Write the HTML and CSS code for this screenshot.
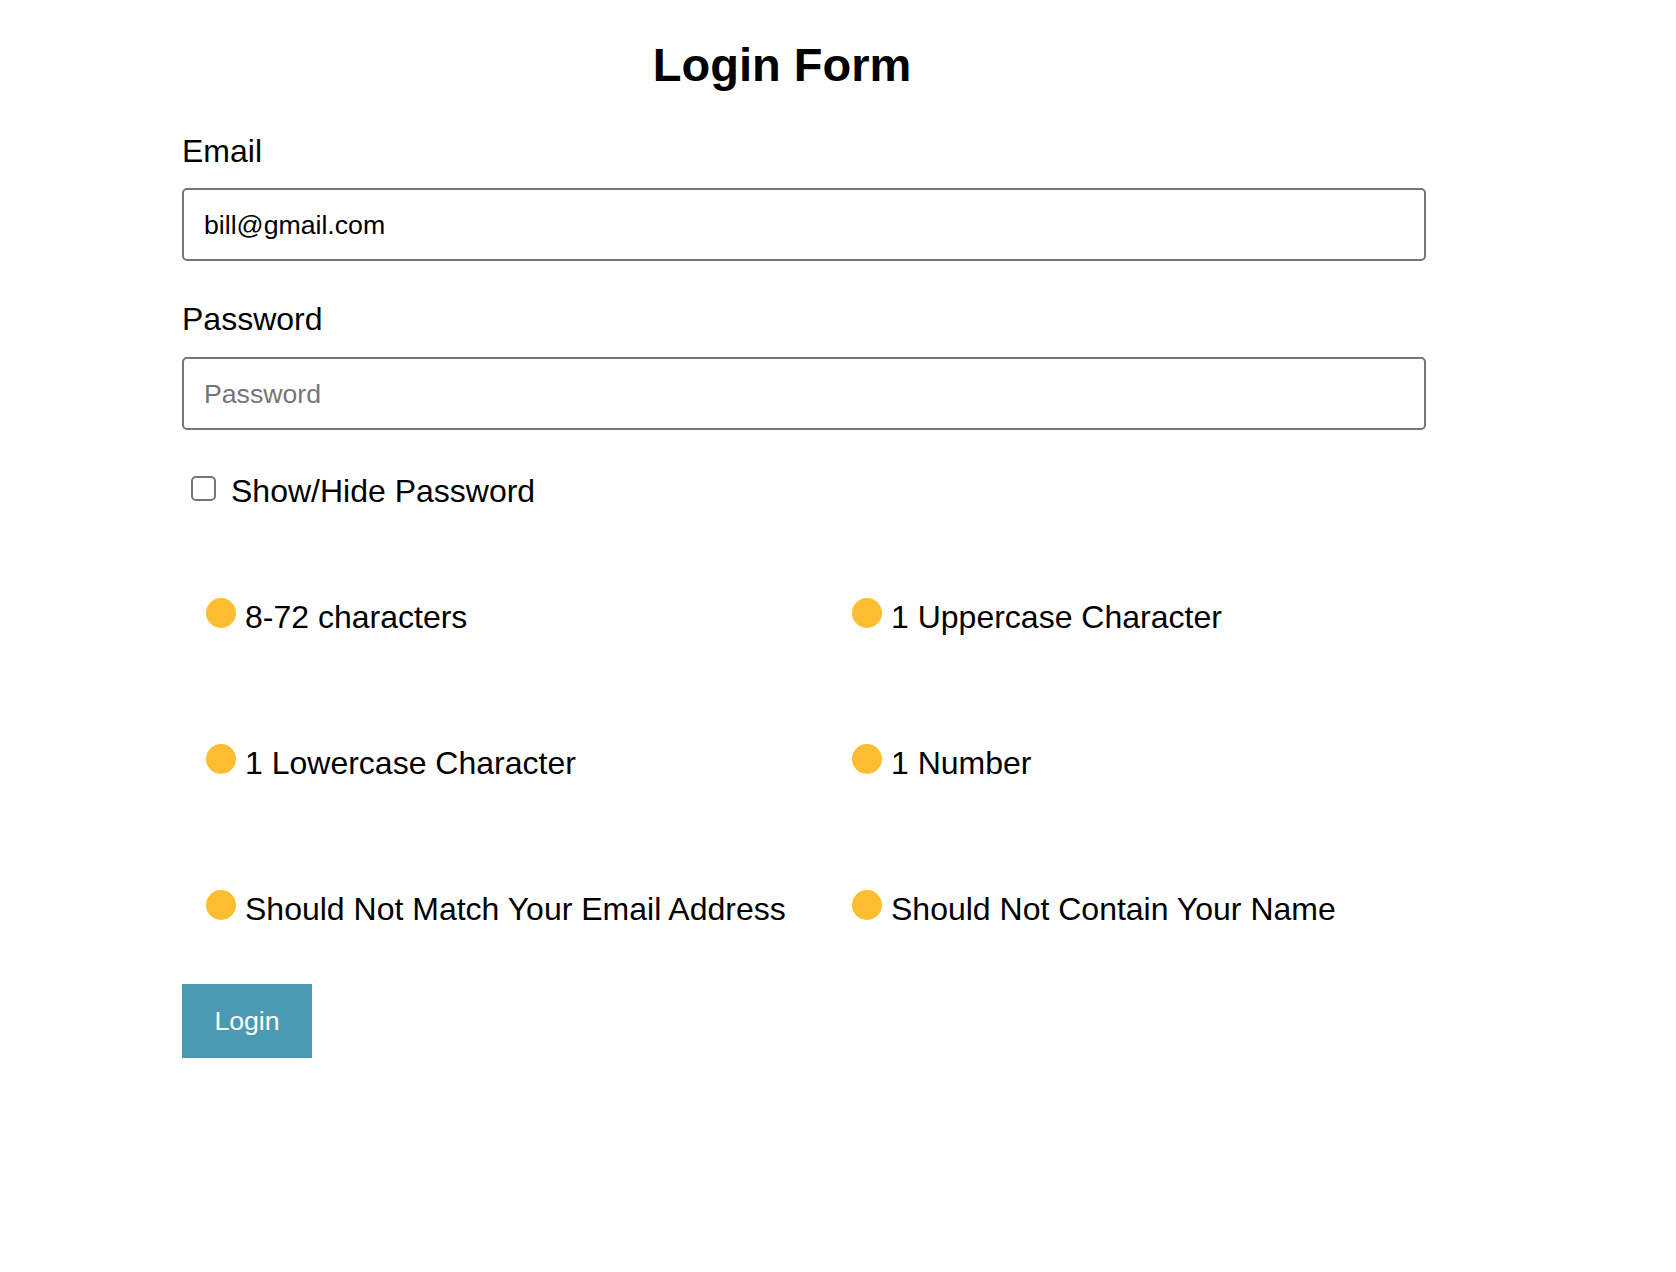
FILE: index.html
```html
<!DOCTYPE html>
<html lang="en">
<head>
<meta charset="utf-8">
<title>Login Form</title>
<link rel="stylesheet" href="styles.css">
</head>
<body>
<form class="login">
  <h1 class="title">Login Form</h1>
  <label class="field-label" for="email">Email</label>
  <input class="text-input" id="email" type="email" value="bill@gmail.com">
  <label class="field-label field-label--second" for="password">Password</label>
  <input class="text-input" id="password" type="password" placeholder="Password">
  <div class="toggle-row">
    <input class="check" id="toggle" type="checkbox">
    <label class="toggle-label" for="toggle">Show/Hide Password</label>
  </div>
  <ul class="rules">
    <li class="rule"><span class="dot"></span><span>8-72 characters</span></li>
    <li class="rule"><span class="dot"></span><span>1 Uppercase Character</span></li>
    <li class="rule"><span class="dot"></span><span>1 Lowercase Character</span></li>
    <li class="rule"><span class="dot"></span><span>1 Number</span></li>
    <li class="rule"><span class="dot"></span><span>Should Not Match Your Email Address</span></li>
    <li class="rule"><span class="dot"></span><span>Should Not Contain Your Name</span></li>
  </ul>
  <button class="submit" type="button">Login</button>
</form>
</body>
</html>
```

FILE: styles.css
```css
html, body {
  margin: 0;
  padding: 0;
  background: #ffffff;
}

body {
  font-family: "Liberation Sans", Arial, Helvetica, sans-serif;
  color: #000000;
}

.login {
  width: 1200px;
  margin: 0 0 0 182px;
  padding: 38px 0 0 0;
}

.title {
  margin: 0;
  font-size: 47px;
  line-height: 54px;
  font-weight: 700;
  text-align: center;
}

.field-label {
  display: block;
  margin: 41px 0 0 0;
  font-size: 32px;
  line-height: 36px;
}

.field-label--second {
  margin-top: 40px;
}

.text-input {
  display: block;
  box-sizing: content-box;
  width: 1200px;
  height: 68px;
  margin: 19px 0 0 0;
  padding: 1px 20px 0 20px;
  border: 2px solid #767676;
  border-radius: 5px;
  font-family: "Liberation Sans", Arial, Helvetica, sans-serif;
  font-size: 26.67px;
  color: #000000;
  background: #ffffff;
  outline: none;
}

#password {
  margin-top: 20px;
}

.text-input::placeholder {
  color: #757575;
  opacity: 1;
}

.toggle-row {
  display: flex;
  align-items: flex-start;
  margin: 43px 0 0 0;
}

.check {
  appearance: none;
  -webkit-appearance: none;
  box-sizing: border-box;
  width: 25px;
  height: 25px;
  margin: 3px 0 0 9px;
  border: 2px solid #767676;
  border-radius: 5px;
  background: #ffffff;
}

.toggle-label {
  margin-left: 15px;
  font-size: 32px;
  line-height: 36px;
}

.rules {
  list-style: none;
  margin: 89px 0 0 0;
  padding: 0 0 0 24px;
  display: grid;
  grid-template-columns: 646px 646px;
  row-gap: 108px;
}

.rule {
  display: flex;
  align-items: flex-start;
  gap: 9px;
  font-size: 32px;
  line-height: 38px;
  white-space: nowrap;
}

.dot {
  flex: none;
  width: 30px;
  height: 30px;
  border-radius: 50%;
  background: #fdbd30;
}

.submit {
  display: block;
  margin: 56px 0 0 0;
  width: 130px;
  height: 74px;
  padding: 0;
  border: none;
  border-radius: 0;
  background: #4b9ab3;
  color: #ffffff;
  font-family: "Liberation Sans", Arial, Helvetica, sans-serif;
  font-size: 26.67px;
}
```
